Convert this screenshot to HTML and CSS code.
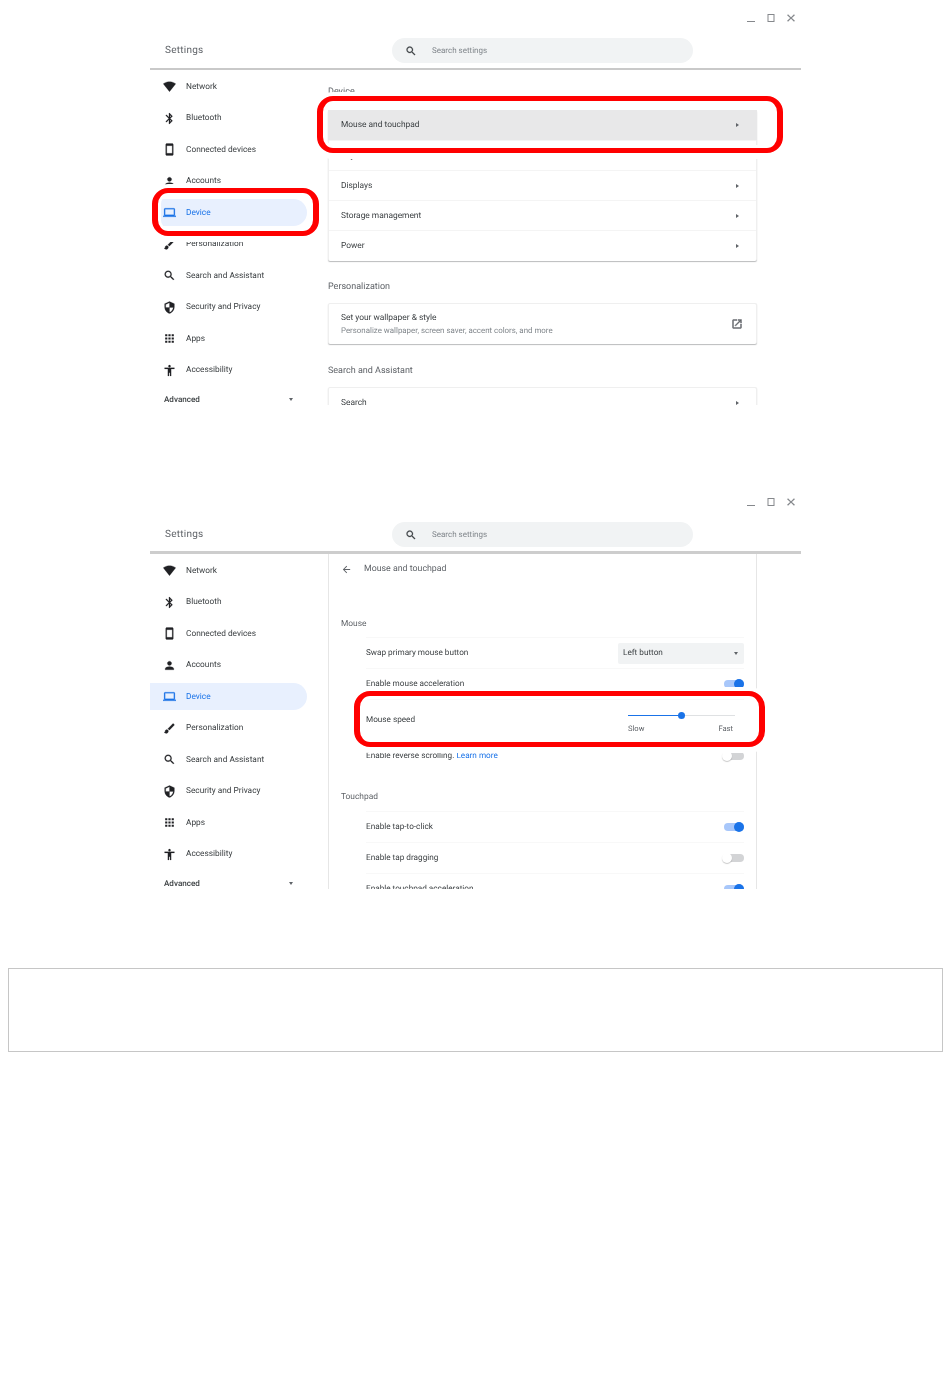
FILE: index.html
```html
<!DOCTYPE html>
<html lang="en">
<head>
<meta charset="utf-8">
<title>Settings: Mouse and touchpad</title>
<link rel="stylesheet" href="styles.css">
</head>
<body>
<svg class="sprite" aria-hidden="true">
  <symbol id="i-wifi" viewBox="0 0 24 24"><path d="M12.01 21.49L23.64 7c-.45-.34-4.93-4-11.64-4C5.28 3 .81 6.66.36 7l11.63 14.49.01.01.01-.01z"/></symbol>
  <symbol id="i-bt" viewBox="0 0 24 24"><path d="M17.71 7.71L12 2h-1v7.59L6.41 5 5 6.41 10.59 12 5 17.59 6.41 19 11 14.41V22h1l5.71-5.71-4.3-4.29 4.3-4.29zM13 5.83l1.88 1.88L13 9.59V5.83zm1.88 10.46L13 18.17v-3.76l1.88 1.88z"/></symbol>
  <symbol id="i-phone" viewBox="0 0 24 24"><path d="M17 1.01L7 1c-1.1 0-2 .9-2 2v18c0 1.1.9 2 2 2h10c1.1 0 2-.9 2-2V3c0-1.1-.9-1.99-2-1.99zM17 19H7V5h10v14z"/></symbol>
  <symbol id="i-person" viewBox="0 0 24 24"><path d="M12 12c2.21 0 4-1.79 4-4s-1.79-4-4-4-4 1.79-4 4 1.79 4 4 4zm0 2c-2.67 0-8 1.34-8 4v2h16v-2c0-2.66-5.33-4-8-4z"/></symbol>
  <symbol id="i-laptop" viewBox="0 0 24 24"><path d="M20 18c1.1 0 1.99-.9 1.99-2L22 6c0-1.1-.9-2-2-2H4c-1.1 0-2 .9-2 2v10c0 1.1.9 2 2 2H0v2h24v-2h-4zM4 6h16v10H4V6z"/></symbol>
  <symbol id="i-brush" viewBox="0 0 24 24"><path d="M7 14c-1.66 0-3 1.34-3 3 0 1.31-1.16 2-2 2 .92 1.22 2.49 2 4 2 2.21 0 4-1.79 4-4 0-1.66-1.34-3-3-3zm13.71-9.37l-1.34-1.34c-.39-.39-1.02-.39-1.41 0L9 12.25 11.75 15l8.96-8.96c.39-.39.39-1.02 0-1.41z"/></symbol>
  <symbol id="i-search" viewBox="0 0 24 24"><path d="M15.5 14h-.79l-.28-.27C15.41 12.59 16 11.11 16 9.5 16 5.91 13.09 3 9.5 3S3 5.91 3 9.5 5.91 16 9.5 16c1.61 0 3.09-.59 4.23-1.57l.27.28v.79l5 4.99L20.49 19l-4.99-5zm-6 0C7.01 14 5 11.99 5 9.5S7.01 5 9.5 5 14 7.01 14 9.5 11.99 14 9.5 14z"/></symbol>
  <symbol id="i-shield" viewBox="0 0 24 24"><path d="M12 1L3 5v6c0 5.55 3.84 10.74 9 12 5.16-1.26 9-6.45 9-12V5l-9-4zm0 10.99h7c-.53 4.12-3.28 7.79-7 8.94V12H5V6.3l7-3.11v8.8z"/></symbol>
  <symbol id="i-apps" viewBox="0 0 24 24"><path d="M4 8h4V4H4v4zm6 12h4v-4h-4v4zm-6 0h4v-4H4v4zm0-6h4v-4H4v4zm6 0h4v-4h-4v4zm6-10v4h4V4h-4zm-6 4h4V4h-4v4zm6 6h4v-4h-4v4zm0 6h4v-4h-4v4z"/></symbol>
  <symbol id="i-a11y" viewBox="0 0 24 24"><path d="M12 2c1.1 0 2 .9 2 2s-.9 2-2 2-2-.9-2-2 .9-2 2-2zm9 7h-6v13h-2v-6h-2v6H9V9H3V7h18v2z"/></symbol>
  <symbol id="i-open" viewBox="0 0 24 24"><path d="M19 19H5V5h7V3H5c-1.11 0-2 .9-2 2v14c0 1.1.89 2 2 2h14c1.1 0 2-.9 2-2v-7h-2v7zM14 3v2h3.59l-9.83 9.83 1.41 1.41L19 6.41V10h2V3h-7z"/></symbol>
  <symbol id="i-back" viewBox="0 0 24 24"><path d="M20 11H7.83l5.59-5.59L12 4l-8 8 8 8 1.41-1.41L7.83 13H20v-2z"/></symbol>
  <symbol id="i-min" viewBox="0 0 10 10"><path d="M1 8h8v1H1z"/></symbol>
  <symbol id="i-max" viewBox="0 0 10 10"><path d="M1.5 1h7v8h-7V1zm1 1v6h5V2h-5z"/></symbol>
  <symbol id="i-close" viewBox="0 0 10 10"><path d="M2 1.3L5 4.3l3-3 .9.9-3 2.8 3 2.8-.9.9-3-3-3 3-.9-.9 3-2.8-3-2.8z"/></symbol>
</svg>

<div class="page">
  <figure class="figure figure--first">
    <div class="shot">
      <div class="window-bar">
        <svg class="win-icon"><use href="#i-min"/></svg>
        <svg class="win-icon"><use href="#i-max"/></svg>
        <svg class="win-icon"><use href="#i-close"/></svg>
      </div>
      <header class="app-header">
        <div class="app-title">Settings</div>
        <div class="search"><svg class="search-icon"><use href="#i-search"/></svg><span>Search settings</span></div>
      </header>
      <div class="app-body">
        <nav class="nav">
          <a class="nav-item"><svg class="icon"><use href="#i-wifi"/></svg>Network</a>
          <a class="nav-item"><svg class="icon"><use href="#i-bt"/></svg>Bluetooth</a>
          <a class="nav-item"><svg class="icon"><use href="#i-phone"/></svg>Connected devices</a>
          <a class="nav-item"><svg class="icon"><use href="#i-person"/></svg>Accounts</a>
          <a class="nav-item nav-item--active"><svg class="icon"><use href="#i-laptop"/></svg>Device</a>
          <a class="nav-item"><svg class="icon"><use href="#i-brush"/></svg>Personalization</a>
          <a class="nav-item"><svg class="icon"><use href="#i-search"/></svg>Search and Assistant</a>
          <a class="nav-item"><svg class="icon"><use href="#i-shield"/></svg>Security and Privacy</a>
          <a class="nav-item"><svg class="icon icon--thin"><use href="#i-apps"/></svg>Apps</a>
          <a class="nav-item"><svg class="icon"><use href="#i-a11y"/></svg>Accessibility</a>
          <div class="nav-advanced"><span>Advanced</span><i class="caret"></i></div>
        </nav>
        <main class="main main--list">
          <h2 class="section-title section-title--first">Device</h2>
          <div class="card">
            <div class="row row--hover"><span>Mouse and touchpad</span><i class="arrow"></i></div>
            <div class="row"><span>Keyboard</span><i class="arrow"></i></div>
            <div class="row"><span>Displays</span><i class="arrow"></i></div>
            <div class="row"><span>Storage management</span><i class="arrow"></i></div>
            <div class="row"><span>Power</span><i class="arrow"></i></div>
          </div>
          <h2 class="section-title">Personalization</h2>
          <div class="card card--media">
            <div class="row row--tall">
              <div class="row-text"><span>Set your wallpaper &amp; style</span><small>Personalize wallpaper, screen saver, accent colors, and more</small></div>
              <svg class="open-icon"><use href="#i-open"/></svg>
            </div>
          </div>
          <h2 class="section-title">Search and Assistant</h2>
          <div class="card">
            <div class="row"><span>Search</span><i class="arrow"></i></div>
          </div>
        </main>
      </div>
    </div>
    <div class="callout callout--row"></div>
    <div class="callout callout--nav"></div>
  </figure>

  <figure class="figure figure--second">
    <div class="shot">
      <div class="window-bar">
        <svg class="win-icon"><use href="#i-min"/></svg>
        <svg class="win-icon"><use href="#i-max"/></svg>
        <svg class="win-icon"><use href="#i-close"/></svg>
      </div>
      <header class="app-header">
        <div class="app-title">Settings</div>
        <div class="search"><svg class="search-icon"><use href="#i-search"/></svg><span>Search settings</span></div>
      </header>
      <div class="app-body">
        <nav class="nav">
          <a class="nav-item"><svg class="icon"><use href="#i-wifi"/></svg>Network</a>
          <a class="nav-item"><svg class="icon"><use href="#i-bt"/></svg>Bluetooth</a>
          <a class="nav-item"><svg class="icon"><use href="#i-phone"/></svg>Connected devices</a>
          <a class="nav-item"><svg class="icon"><use href="#i-person"/></svg>Accounts</a>
          <a class="nav-item nav-item--active"><svg class="icon"><use href="#i-laptop"/></svg>Device</a>
          <a class="nav-item"><svg class="icon"><use href="#i-brush"/></svg>Personalization</a>
          <a class="nav-item"><svg class="icon"><use href="#i-search"/></svg>Search and Assistant</a>
          <a class="nav-item"><svg class="icon"><use href="#i-shield"/></svg>Security and Privacy</a>
          <a class="nav-item"><svg class="icon icon--thin"><use href="#i-apps"/></svg>Apps</a>
          <a class="nav-item"><svg class="icon"><use href="#i-a11y"/></svg>Accessibility</a>
          <div class="nav-advanced"><span>Advanced</span><i class="caret"></i></div>
        </nav>
        <main class="main main--sub">
          <div class="sub-header"><svg class="back-icon"><use href="#i-back"/></svg><span>Mouse and touchpad</span></div>
          <h2 class="sub-title sub-title--first">Mouse</h2>
          <div class="setting"><span>Swap primary mouse button</span><div class="select"><span>Left button</span><i class="caret"></i></div></div>
          <div class="setting"><span>Enable mouse acceleration</span><i class="toggle toggle--on"></i></div>
          <div class="setting setting--tall">
            <span>Mouse speed</span>
            <div class="slider">
              <div class="slider-track"><div class="slider-fill"></div><i class="slider-knob"></i></div>
              <div class="slider-labels"><span>Slow</span><span>Fast</span></div>
            </div>
          </div>
          <div class="setting"><span>Enable reverse scrolling. <a class="link">Learn more</a></span><i class="toggle"></i></div>
          <h2 class="sub-title">Touchpad</h2>
          <div class="setting"><span>Enable tap-to-click</span><i class="toggle toggle--on"></i></div>
          <div class="setting"><span>Enable tap dragging</span><i class="toggle"></i></div>
          <div class="setting"><span>Enable touchpad acceleration</span><i class="toggle toggle--on"></i></div>
        </main>
      </div>
    </div>
    <div class="callout callout--speed"></div>
  </figure>

  <div class="empty-box"></div>
</div>
</body>
</html>
```

FILE: styles.css
```css
* { box-sizing: border-box; }
html, body { margin: 0; background: #fff; }
body {
  font-family: Roboto, "Liberation Sans", sans-serif;
  font-size: 8.6px;
  color: #3c4043;
  text-rendering: geometricPrecision;
}
.sprite { display: none; }
.page { height: 1379px; }

.figure { position: relative; width: 651px; height: 405px; margin: 0 0 0 150px; overflow: hidden; background: #fff; }
.figure--second { margin-top: 79px; }
.shot { height: 100%; filter: blur(.4px); }

.window-bar { height: 34px; display: flex; justify-content: flex-end; gap: 10px; padding: 13px 5px 0 0; }
.win-icon { width: 10px; height: 10px; fill: #85888c; }

.app-header { height: 36px; display: flex; align-items: flex-start; border-bottom: 2px solid #c9c9c9; padding-left: 15px; }
.figure--second .app-header { border-bottom: 3px solid #cdcdcd; }
.app-title { width: 227px; height: 29px; line-height: 34px; font-size: 10px; letter-spacing: .25px; color: #5f6368; }
.search { width: 301px; height: 25px; margin-top: 4px; display: flex; align-items: center; background: #f1f3f4; border-radius: 13px; padding-left: 13px; font-size: 8px; color: #80868b; }
.search-icon { width: 12px; height: 12px; margin-right: 15px; fill: #3c4043; stroke: #3c4043; stroke-width: .5; flex: none; }

.app-body { display: flex; height: 335px; overflow: hidden; }
.nav { width: 178px; flex: none; padding-top: 3px; }
.nav-item { display: flex; align-items: center; width: 157px; height: 27px; margin-bottom: 4.5px; padding-left: 13px; border-radius: 0 13.5px 13.5px 0; font-size: 8.3px; color: #3c4043; }
.nav-item--active { background: #e8f0fe; color: #1a73e8; }
.icon { width: 13px; height: 13px; margin-right: 10px; fill: #202124; stroke: #202124; stroke-width: .4; flex: none; }
.icon--thin { stroke: none; }
.nav-item--active .icon { fill: #1a73e8; stroke: #1a73e8; }
.nav-advanced { display: flex; align-items: center; justify-content: space-between; width: 143px; height: 22px; padding-left: 14px; font-size: 8.1px; font-weight: 500; color: #3c4043; }
.caret { width: 0; height: 0; border: 2.5px solid transparent; border-top: 3px solid #5f6368; border-bottom: 0; }

.main { width: 429px; flex: none; }
.main--list { padding-top: 16px; }
.main--sub { padding: 9px 12px 0; border-left: 1px solid #e6e6e6; border-right: 1px solid #e6e6e6; }

.section-title { height: 10px; margin: 20px 0 12px; font-size: 9px; font-weight: 400; line-height: 12px; color: #5f6368; }
.section-title--first { margin: 0 0 14px; }
.card { border: 1px solid #efefef; border-bottom: 0; padding-bottom: 1px; border-radius: 2px; box-shadow: 0 1px 1px rgba(60, 64, 67, .35); background: #fff; }
.card--media { margin-bottom: 21px; }
.section-title--first + .card { border-top: 0; }
.row { height: 30px; display: flex; align-items: center; justify-content: space-between; padding: 0 17px 0 12px; font-size: 8.4px; color: #3c4043; border-top: 1px solid #f4f4f4; }
.card .row:first-child { border-top: 0; }
.row--hover { background: #e8e8e9; margin: 0 -1px; padding: 0 18px 0 13px; }
.row--tall { height: 39px; padding-right: 13px; }
.row-text { display: flex; flex-direction: column; gap: 3px; }
.row-text small { font-size: 7.9px; color: #80868b; }
.arrow { width: 0; height: 0; border: 2.5px solid transparent; border-left: 3px solid #5f6368; border-right: 0; }
.open-icon { width: 12px; height: 12px; fill: #5f6368; stroke: #5f6368; stroke-width: .8; }

.sub-header { display: flex; align-items: center; height: 12px; font-size: 8.8px; color: #5f6368; }
.back-icon { width: 11px; height: 11px; margin: 1px 12px 0 0; fill: #5f6368; }
.sub-title { height: 10px; margin: 21px 0 9px; font-size: 8.4px; font-weight: 400; line-height: 10px; color: #5f6368; }
.sub-title--first { margin: 44px 0 8px; }
.setting { display: flex; align-items: center; justify-content: space-between; height: 31px; margin-left: 25px; font-size: 8.2px; color: #3c4043; border-top: 1px solid #f8f8f8; }
.setting--tall { height: 41px; }
.select { display: flex; align-items: center; justify-content: space-between; width: 126px; height: 21px; padding: 0 6px 0 5px; background: #f1f3f4; border-radius: 2px; }
.toggle { position: relative; display: block; width: 20px; height: 8px; margin-top: -1px; border-radius: 4px; background: #d3d4d6; }
.toggle::after { content: ""; position: absolute; left: -2px; top: -1px; width: 10px; height: 10px; border-radius: 50%; background: #fff; box-shadow: 0 1px 1px rgba(0, 0, 0, .22); }
.toggle--on { background: #a8c7fa; }
.toggle--on::after { left: auto; right: 0; background: #1a73e8; box-shadow: none; }
.link { color: #1a73e8; }

.slider { width: 107px; margin: 8px 9px 0 0; display: flex; flex-direction: column; gap: 8px; }
.slider-track { position: relative; height: 1px; background: #dfe1e3; }
.slider-fill { width: 53px; height: 1px; background: #1a73e8; }
.slider-knob { position: absolute; left: 50px; top: -3px; width: 7px; height: 7px; border-radius: 50%; background: #1a73e8; }
.slider-labels { display: flex; justify-content: space-between; padding-right: 2px; font-size: 7.6px; color: #5f6368; }

.callout { position: absolute; border: solid #f00; border-width: 5px 6px; border-radius: 16px; box-shadow: 0 1px 0 5px #fff, inset 0 0 0 3px #fff; }
.callout--row { left: 167px; top: 96px; width: 466px; height: 57px; }
.callout--nav { left: 2px; top: 188px; width: 167px; height: 48px; }
.callout--speed { left: 204px; top: 207px; width: 411px; height: 56px; }

.empty-box { width: 935px; height: 84px; margin: 79px 0 0 8px; border: 1px solid #c6c6c6; }
```
